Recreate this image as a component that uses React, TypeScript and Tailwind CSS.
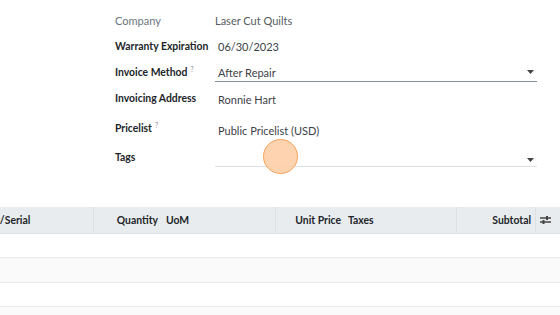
import React from "react";

const font = { fontFamily: 'Lato, "Open Sans", sans-serif' };

function Caret() {
  return (
    <svg width="7" height="4" viewBox="0 0 7 4" className="shrink-0">
      <path d="M0 0h7L3.5 4z" fill="#444" />
    </svg>
  );
}

function Label({ text, help, light }: { text: string; help?: boolean; light?: boolean }) {
  return (
    <div className={light ? "text-[#6c757d] font-normal text-[11px]" : "text-[#212529] font-bold text-[10.4px]"}>
      {text}
      {help && <sup className="ml-[3px] text-[7px] text-[#8a9096] font-normal">?</sup>}
    </div>
  );
}

function Row({ label, children, mt }: { label: React.ReactNode; children: React.ReactNode; mt: string }) {
  return (
    <div className={`flex items-center h-[20px] ${mt}`}>
      <div className="w-[100px] shrink-0">{label}</div>
      {children}
    </div>
  );
}

function Form() {
  return (
    <div className="pl-[115px] pr-[23px] pt-[10px]">
      <Row label={<Label text="Company" light />} mt="mt-0">
        <div className="text-[#555b61]">Laser Cut Quilts</div>
      </Row>
      <Row label={<Label text="Warranty Expiration" />} mt="mt-[6px]">
        <div className="pl-[3px] text-[#3d4248]">06/30/2023</div>
      </Row>
      <Row label={<Label text="Invoice Method" help />} mt="mt-[6px]">
        <div className="flex-1 self-stretch flex items-center justify-between pl-[3px] pr-[3px] border-b-[1.5px] border-[#868e96] text-[#3d4248]">
          <span className="pt-[1px]">After Repair</span>
          <Caret />
        </div>
      </Row>
      <Row label={<Label text="Invoicing Address" />} mt="mt-[6px]">
        <div className="pl-[3px] text-[#3d4248] pt-[2px]">Ronnie Hart</div>
      </Row>
      <Row label={<Label text="Pricelist" help />} mt="mt-[10px]">
        <div className="pl-[3px] text-[#3d4248] pt-[4px]">Public Pricelist (USD)</div>
      </Row>
      <Row label={<Label text="Tags" />} mt="mt-[9px]">
        <div className="relative flex-1 self-stretch flex items-end justify-end pr-[3px] pb-[4px] border-b border-[#dee2e6]">
          <Caret />
          <div className="absolute left-[48px] top-[-8px] w-[35px] h-[35px] rounded-full bg-[#fdcfa6]/90 border-[1.5px] border-[#f6a25a]" />
        </div>
      </Row>
    </div>
  );
}

function SettingsIcon() {
  return (
    <svg width="11" height="10" viewBox="0 0 11 10">
      <path d="M0 3h11M0 7h11" stroke="#444" strokeWidth="1.3" />
      <rect x="6" y="1" width="2" height="4" fill="#444" />
      <rect x="2.5" y="5" width="2" height="4" fill="#444" />
    </svg>
  );
}

function Table() {
  const cell = "h-full flex items-center border-l border-[#dcdfe3] shrink-0";
  return (
    <div className="mt-[40px] overflow-hidden">
      <div className="flex h-[27px] bg-[#e9ecef] border-b border-[#dee2e6] text-[#212529] font-bold text-[10.4px]">
        <div className="h-full flex items-center w-[93px] shrink-0 overflow-hidden">
          <span className="-ml-[15px] whitespace-nowrap">Lot/Serial</span>
        </div>
        <div className={`${cell} w-[69px] justify-end pr-[4px]`}>Quantity</div>
        <div className={`${cell} w-[113px] pl-[3px] border-[#e9ecef]`}>UoM</div>
        <div className={`${cell} w-[69px] justify-end pr-[3px]`}>Unit Price</div>
        <div className={`${cell} w-[112px] pl-[3px] border-[#e9ecef]`}>Taxes</div>
        <div className={`${cell} w-[79px] justify-end pr-[4px]`}>Subtotal</div>
        <div className={`${cell} flex-1 pl-[4px]`}>
          <SettingsIcon />
        </div>
      </div>
      <div className="h-[24px] bg-white border-b border-[#ebebeb]" />
      <div className="h-[25px] bg-[#fafafa] border-b border-[#ebebeb]" />
      <div className="h-[24px] bg-white border-b border-[#ebebeb]" />
      <div className="h-[10px] bg-[#fafafa]" />
    </div>
  );
}

export default function App() {
  return (
    <div className="w-[560px] h-[315px] bg-white overflow-hidden text-[11px] leading-none" style={font}>
      <Form />
      <Table />
    </div>
  );
}
